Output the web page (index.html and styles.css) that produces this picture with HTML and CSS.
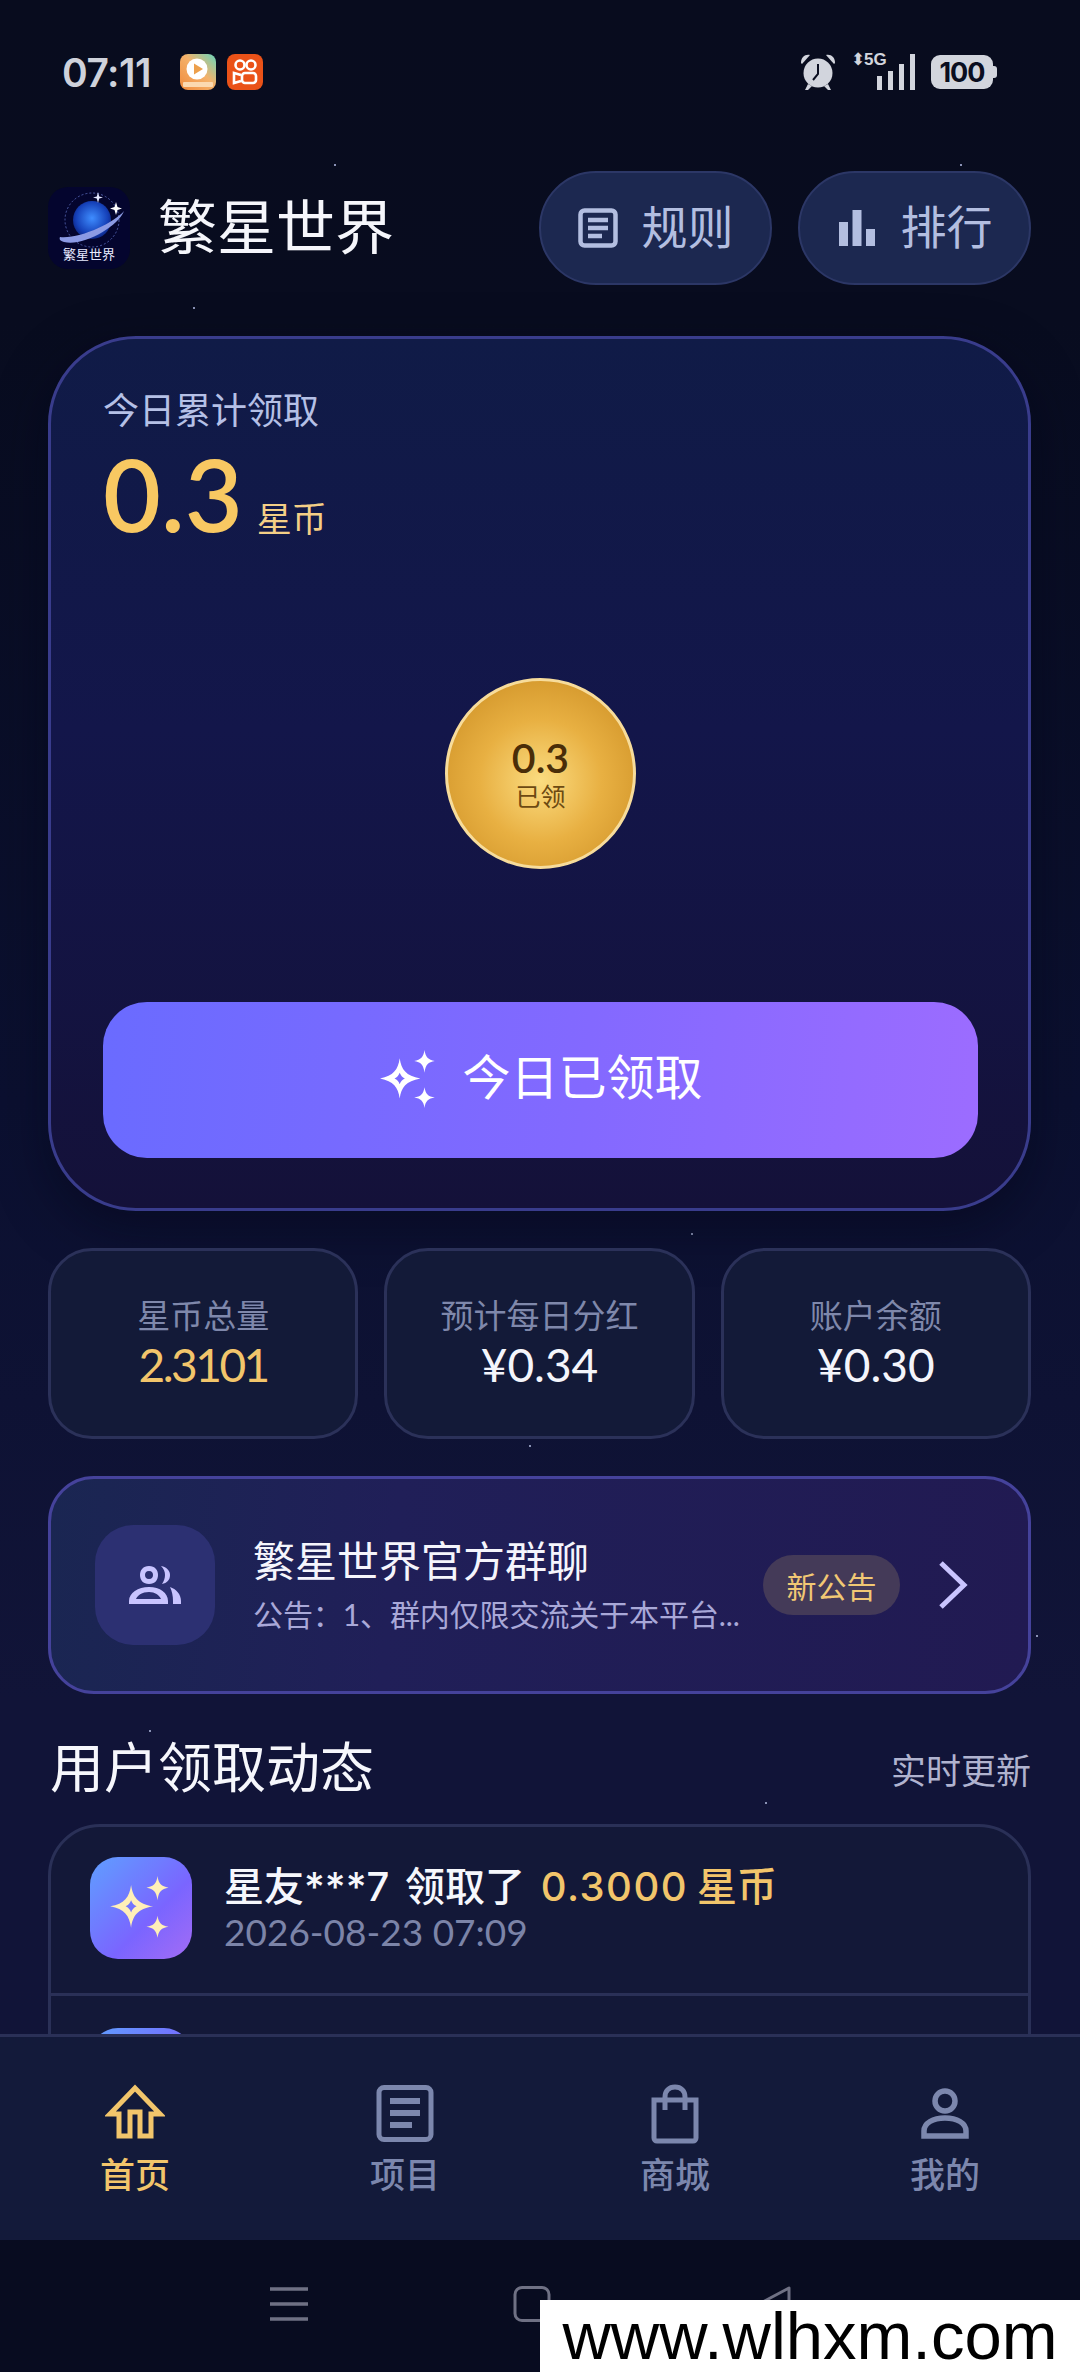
FILE: index.html
```html
<!DOCTYPE html>
<html lang="zh-CN">
<head>
<meta charset="utf-8">
<title>繁星世界</title>
<link rel="stylesheet" href="styles.css">
</head>
<body>
<svg width="0" height="0" class="defs">
  <defs>
    <symbol id="sparkle" viewBox="0 0 60 60">
      <path fill-rule="evenodd" d="M21 9C22.500 20 27 26 41 28.500C27 31 22.500 37 21 48C19.500 37 15 31 2 28.500C15 26 19.500 20 21 9ZM21 23C20 25.500 18.500 27.500 16 28.500C18.500 29.500 20 31.500 21 34C22 31.500 23.500 29.500 26 28.500C23.500 27.500 22 25.500 21 23Z"/>
      <path d="M45 1C46 8 48.500 10.500 55 11.500C48.500 12.500 46 15 45 23C44 15 41.500 12.500 35 11.500C41.500 10.500 44 8 45 1Z"/>
      <path d="M45 37C46 43.500 48.500 46 55 47C48.500 48 46 50.500 45 57C44 50.500 41.500 48 35 47C41.500 46 44 43.500 45 37Z"/>
    </symbol>
  </defs>
</svg>
<div class="page">
  <div class="status">
    <div class="status-left">
      <span class="time">07:11</span>
      <svg class="app-icon" viewBox="0 0 36 36">
        <defs><linearGradient id="appA" x1="0" y1="1" x2="1" y2="0"><stop offset="0" stop-color="#f08a3c"/><stop offset=".55" stop-color="#f4b26b"/><stop offset="1" stop-color="#66d6bd"/></linearGradient></defs>
        <rect width="36" height="36" rx="8" fill="url(#appA)"/>
        <circle cx="17" cy="15" r="10.500" fill="#fff"/>
        <path d="M14 9.500L23 15L14 20.500Z" fill="#eda04c"/>
        <rect x="3" y="28" width="30" height="5" rx="1" fill="#fbd9b0"/>
      </svg>
      <svg class="app-icon" viewBox="0 0 36 36">
        <rect width="36" height="36" rx="8" fill="#ea5218"/>
        <g fill="none" stroke="#fff" stroke-width="2.600">
          <circle cx="13" cy="11" r="4.500"/>
          <circle cx="24" cy="11" r="4.500"/>
          <rect x="15" y="19" width="14" height="10" rx="3"/>
          <path d="M14 21L7 19V29L14 27"/>
        </g>
      </svg>
    </div>
    <div class="status-right">
      <svg class="alarm" viewBox="0 0 38 38">
        <g fill="#d2d5dd">
          <path d="M2 10C2 4 6 1 11 2L3 11Z"/>
          <path d="M36 10C36 4 32 1 27 2L35 11Z"/>
          <circle cx="19" cy="20" r="14.500"/>
          <path d="M9 31L6 37H9L13 33ZM29 31L32 37H29L25 33Z"/>
        </g>
        <path d="M19 11V21L14 27" fill="none" stroke="#0a0e20" stroke-width="2"/>
      </svg>
      <div class="signal">
        <span class="arrows">⬍</span><span class="five-g">5G</span>
        <svg class="bars" viewBox="0 0 38 36">
          <rect x="0" y="22" width="5" height="14" fill="#d2d5dd"/>
          <rect x="11" y="17" width="5" height="19" fill="#d2d5dd"/>
          <rect x="22" y="10" width="5" height="26" fill="#d2d5dd"/>
          <rect x="33" y="0" width="5" height="36" fill="#d2d5dd"/>
        </svg>
      </div>
      <div class="battery"><span class="battery-num">100</span></div>
    </div>
  </div>

  <header class="top">
    <div class="brand">
      <svg class="logo" viewBox="0 0 82 82">
        <defs><radialGradient id="globe" cx=".5" cy=".45" r=".6"><stop offset="0" stop-color="#3f8dff"/><stop offset=".7" stop-color="#1540b8"/><stop offset="1" stop-color="#0a1c70"/></radialGradient></defs>
        <rect width="82" height="82" rx="20" fill="#04052e"/>
        <circle cx="44" cy="33" r="27" fill="none" stroke="#5d6fc0" stroke-width=".8" stroke-dasharray="2 2"/>
        <circle cx="44" cy="33" r="19" fill="url(#globe)"/>
        <path d="M12 50C32 52 66 36 76 24C70 40 34 60 16 55C12 54 11 52 12 50Z" fill="#8b9ae4"/>
        <path d="M50 5L51.200 9.500L55 10.500L51.200 11.500L50 16L48.800 11.500L45 10.500L48.800 9.500Z" fill="#e4e8ff"/>
        <path d="M68 15L69.500 20L74 21.500L69.500 23L68 28L66.500 23L62 21.500L66.500 20Z" fill="#fff"/>
        <text x="41" y="72" class="logo-text">繁星世界</text>
      </svg>
      <h1 class="brand-name">繁星世界</h1>
    </div>
    <div class="actions">
      <button class="pill">
        <svg class="pill-icon" viewBox="0 0 40 40"><g fill="none" stroke="#b3bee0" stroke-width="4.500"><rect x="2.500" y="2.500" width="35" height="35" rx="4"/><path d="M10 12H30M10 20H30M10 28H24"/></g></svg>
        <span>规则</span>
      </button>
      <button class="pill">
        <svg class="pill-icon" viewBox="0 0 40 40"><g fill="#b3bee0"><rect x="2" y="14" width="9" height="24"/><rect x="15.500" y="2" width="9" height="36"/><rect x="29" y="21" width="9" height="17"/></g></svg>
        <span>排行</span>
      </button>
    </div>
  </header>

  <section class="hero">
    <div class="hero-label">今日累计领取</div>
    <div class="hero-amount"><span class="hero-num">0.3</span><span class="hero-unit">星币</span></div>
    <div class="coin-area">
      <div class="coin">
        <span class="coin-num">0.3</span>
        <span class="coin-label">已领</span>
      </div>
    </div>
    <button class="claim">
      <svg class="claim-icon"><use href="#sparkle"/></svg>
      <span class="claim-text">今日已领取</span>
    </button>
  </section>

  <section class="stats">
    <div class="stat"><span class="stat-label">星币总量</span><span class="stat-value gold tight">2.3101</span></div>
    <div class="stat"><span class="stat-label">预计每日分红</span><span class="stat-value">¥0.34</span></div>
    <div class="stat"><span class="stat-label">账户余额</span><span class="stat-value">¥0.30</span></div>
  </section>

  <section class="notice">
    <div class="notice-icon">
      <svg class="people" viewBox="0 0 52 38">
        <g fill="#c9c4ff">
          <path fill-rule="evenodd" d="M20 0C26 0 29 4 29 9C29 14 26 18 20 18C14 18 11 14 11 9C11 4 14 0 20 0ZM20 5C17 5 16 7 16 9C16 11 17 13 20 13C23 13 24 11 24 9C24 7 23 5 20 5Z"/>
          <path d="M32 0C38 1 41 5 41 9C41 14 38 17 33 18C35 15 36 12 36 9C36 6 35 3 32 0Z"/>
          <path fill-rule="evenodd" d="M0 38V35C0 27 9 21 20 21C31 21 39 27 39 35V38ZM7 33H32C30 29 26 26 20 26C13 26 9 29 7 33Z"/>
          <path d="M41 21C47 23 52 28 52 35V38H44V35C44 30 43 25 41 21Z"/>
        </g>
      </svg>
    </div>
    <div class="notice-body">
      <div class="notice-title">繁星世界官方群聊</div>
      <div class="notice-sub">公告：1、群内仅限交流关于本平台...</div>
    </div>
    <span class="notice-badge">新公告</span>
    <svg class="chev" viewBox="0 0 30 50"><path d="M3 3L26 25L3 47" fill="none" stroke="#c9c4ff" stroke-width="5"/></svg>
  </section>

  <div class="section-head">
    <h2 class="section-title">用户领取动态</h2>
    <span class="section-note">实时更新</span>
  </div>

  <section class="feed">
    <div class="feed-row">
      <div class="avatar"><svg class="avatar-icon"><use href="#sparkle"/></svg></div>
      <div class="feed-text">
        <div class="feed-title">星友***7 领取了 <span class="gold feed-amount">0.3000</span><span class="gold feed-unit">星币</span></div>
        <div class="feed-time">2026-08-23 07:09</div>
      </div>
    </div>
    <div class="feed-row">
      <div class="avatar"><svg class="avatar-icon"><use href="#sparkle"/></svg></div>
    </div>
  </section>
</div>

<div class="dock">
  <nav class="tabs">
    <a class="tab active">
      <svg class="tab-icon" viewBox="0 0 60 60"><path d="M5 30L30 4L55 30H46V52H35V28H25V52H14V30Z" fill="none" stroke="currentColor" stroke-width="5" stroke-linejoin="miter"/></svg>
      <span>首页</span>
    </a>
    <a class="tab">
      <svg class="tab-icon" viewBox="0 0 60 60"><g fill="none" stroke="currentColor" stroke-width="5"><rect x="4" y="3.500" width="52" height="52" rx="5"/></g><g fill="currentColor"><rect x="15" y="14" width="30" height="6"/><rect x="15" y="26" width="30" height="6"/><rect x="15" y="38" width="22" height="6"/></g></svg>
      <span>项目</span>
    </a>
    <a class="tab">
      <svg class="tab-icon" viewBox="0 0 60 60"><g fill="none" stroke="currentColor" stroke-width="5"><path d="M9 16H51V54A3 3 0 0 1 48 57H12A3 3 0 0 1 9 54Z"/><path d="M20 26V13C20 7 24 3 30 3C36 3 40 7 40 13V26"/></g></svg>
      <span>商城</span>
    </a>
    <a class="tab">
      <svg class="tab-icon" viewBox="0 0 60 60"><g fill="none" stroke="currentColor" stroke-width="5.500"><circle cx="30" cy="17" r="10"/><path d="M9 52V47C9 39 18 34 30 34C42 34 51 39 51 47V52Z"/></g></svg>
      <span>我的</span>
    </a>
  </nav>
  <div class="sysbar">
    <svg class="sys-icon" viewBox="0 0 38 36"><path d="M0 3H38M0 18H38M0 33H38" stroke="#6f7184" stroke-width="3.500"/></svg>
    <svg class="sys-icon" viewBox="0 0 38 36"><rect x="2" y="1.500" width="34" height="33" rx="7" fill="none" stroke="#6f7184" stroke-width="3"/></svg>
    <svg class="sys-icon" viewBox="0 0 38 36"><path d="M34 2V34L4 18Z" fill="none" stroke="#6f7184" stroke-width="3" stroke-linejoin="round"/></svg>
  </div>
</div>
<div class="watermark">www.wlhxm.com</div>
</body>
</html>
```
FILE: styles.css
```css
* { box-sizing: border-box; }
html, body { margin: 0; padding: 0; }
body {
  position: relative;
  width: 1080px;
  height: 2372px;
  overflow: hidden;
  color: #fff;
  font-family: "Lato", "Noto Sans CJK SC", sans-serif;
  background:
    radial-gradient(circle 1.500px at 335px 165px, #8a92b5 98%, transparent),
    radial-gradient(circle 1.500px at 961px 165px, #8a92b5 98%, transparent),
    radial-gradient(circle 1.500px at 194px 308px, #8a92b5 98%, transparent),
    radial-gradient(circle 1.500px at 692px 1234px, #8a92b5 98%, transparent),
    radial-gradient(circle 1.500px at 530px 1446px, #8a92b5 98%, transparent),
    radial-gradient(circle 1.500px at 1037px 1636px, #8a92b5 98%, transparent),
    radial-gradient(circle 1.500px at 150px 1731px, #8a92b5 98%, transparent),
    radial-gradient(circle 1.500px at 766px 1803px, #8a92b5 98%, transparent),
    linear-gradient(180deg, #080c1e 0, #080c1f 320px, #0b1030 1100px, #111438 1700px, #111438 100%);
}
.defs { position: absolute; }
.page { padding: 0 49px 0 48px; }

/* status bar */
.status { height: 144px; display: flex; justify-content: space-between; align-items: center; padding: 0 38px 0 14px; }
.status-left { display: flex; align-items: center; gap: 11px; }
.time { font-family: "Inter", "Noto Sans", sans-serif; font-size: 39px; font-weight: 600; color: #cfd2db; letter-spacing: -.500px; margin-right: 18px; }
.app-icon { width: 36px; height: 36px; display: block; }
.status-right { display: flex; align-items: center; }
.alarm { width: 38px; height: 38px; display: block; }
.signal { position: relative; width: 66px; height: 36px; margin-left: 14px; }
.arrows { position: absolute; left: 0; top: -5px; font-size: 17px; color: #d2d5dd; font-family: "DejaVu Sans", sans-serif; line-height: 20px; }
.five-g { position: absolute; left: 13px; top: -4px; font-size: 17px; font-weight: 700; line-height: 20px; color: #d2d5dd; font-family: "Liberation Sans", sans-serif; }
.bars { position: absolute; right: 2px; top: 0; width: 38px; height: 36px; }
.battery { position: relative; width: 62px; height: 34px; margin-left: 14px; background: #d2d5dd; border-radius: 9px; display: flex; align-items: center; justify-content: center; }
.battery::after { content: ""; position: absolute; right: -4px; top: 11px; width: 4px; height: 12px; background: #d2d5dd; border-radius: 0 3px 3px 0; }
.battery-num { font-family: "Inter", sans-serif; font-size: 27px; font-weight: 700; color: #0a0e20; letter-spacing: -1px; }

/* header */
.top { display: flex; justify-content: space-between; align-items: center; height: 114px; margin-top: 27px; }
.brand { display: flex; align-items: center; gap: 28px; }
.logo { width: 82px; height: 82px; display: block; }
.logo-text { font-family: "Noto Sans CJK SC", sans-serif; font-size: 13px; fill: #e8eaff; text-anchor: middle; }
.brand-name { margin: -3px 0 0; font-size: 59px; font-weight: 400; line-height: 1; color: #f5f6fb; }
.actions { display: flex; gap: 26px; }
.pill { width: 233px; height: 114px; display: flex; align-items: center; justify-content: center; gap: 24px; border-radius: 57px; border: 2px solid #2c3766; background: #1c2850; color: #b3bee0; font: inherit; font-size: 46px; line-height: 1; padding: 0; }
.pill span { margin-top: -3px; }
.pill-icon { width: 40px; height: 40px; display: block; }

/* hero */
.hero { height: 875px; margin-top: 51px; padding: 48px 50px 50px 52px; display: flex; flex-direction: column; border: 3px solid #393c8c; border-radius: 88px; background: linear-gradient(180deg, #101b47 0, #13164a 45%, #141139 100%); box-shadow: 0 16px 50px rgba(4, 6, 24, .5); }
.hero-label { font-size: 36px; line-height: 46px; color: #b5c0e6; }
.hero-amount { display: flex; align-items: baseline; margin-top: 8px; height: 104px; }
.hero-num { font-size: 100px; line-height: 104px; color: #f8c862; font-weight: 600; }
.hero-unit { margin-left: 14px; font-size: 35px; line-height: 40px; color: #f4cf86; }
.coin-area { flex: 1; display: flex; align-items: center; justify-content: center; }
.coin { width: 191px; height: 191px; border-radius: 50%; display: flex; flex-direction: column; align-items: center; justify-content: center; border: 3px solid #f7dc9b; background: radial-gradient(circle at 50% 54%, #fbdc80 0, #e8b042 45%, #c88a20 100%); }
.coin-num { font-size: 41px; line-height: 44px; color: #4a2d08; font-weight: 600; }
.coin-label { font-size: 25px; line-height: 32px; color: #6d4a12; }
.claim { height: 156px; display: flex; align-items: center; justify-content: center; gap: 22px; border: 0; border-radius: 44px; background: linear-gradient(95deg, #6a6bff 0, #8369ff 55%, #9c6cff 100%); color: #fff; font: inherit; font-size: 48px; line-height: 1; padding: 0; }
.claim-text { margin-top: -6px; font-weight: 400; }
.claim-icon { width: 62px; height: 62px; display: block; fill: #fff; }

/* stats */
.stats { display: grid; grid-template-columns: repeat(3, 1fr); gap: 26px; margin-top: 37px; }
.stat { height: 191px; padding-top: 42px; display: flex; flex-direction: column; align-items: center; border: 3px solid #2b3159; border-radius: 44px; background: #131a38; }
.stat-label { font-size: 33px; line-height: 44px; color: #7f88ab; }
.stat-value { font-size: 46px; line-height: 55px; color: #f4f5fb; }
.tight { letter-spacing: -2.500px; }
.gold { color: #f2c56b; }

/* notice */
.notice { height: 218px; margin-top: 37px; padding: 0 60px 0 44px; display: flex; align-items: center; border: 3px solid #45429b; border-radius: 46px; background: linear-gradient(95deg, #1a2652 0, #201f58 35%, #211a52 100%); }
.notice-icon { width: 120px; height: 120px; flex: none; display: flex; align-items: center; justify-content: center; border-radius: 38px; background: #2c3072; }
.people { width: 52px; height: 38px; display: block; }
.notice-body { flex: 1; margin-left: 38px; }
.notice-title { font-size: 42px; line-height: 48px; color: #f5f5fc; }
.notice-sub { margin-top: 9px; font-size: 30px; line-height: 40px; color: #a9a8d8; letter-spacing: -.100px; }
.notice-badge { width: 137px; height: 60px; flex: none; display: flex; align-items: center; justify-content: center; border-radius: 30px; background: #443a58; color: #f1c874; font-size: 30px; }
.chev { width: 30px; height: 50px; flex: none; margin-left: 38px; display: block; }

/* section */
.section-head { display: flex; justify-content: space-between; align-items: center; height: 64px; margin-top: 42px; padding: 0 0 0 2px; }
.section-title { margin: 0; font-size: 54px; font-weight: 400; line-height: 64px; color: #f6f7fc; }
.section-note { font-size: 35px; color: #b0b3cf; }

/* feed */
.feed { margin-top: 24px; border: 3px solid #2a3057; border-radius: 52px; background: #131838; }
.feed-row { display: flex; align-items: center; padding: 30px 39px 34px; height: 169px; border-bottom: 3px solid #2a3057; }
.feed-row:last-child { border-bottom: 0; }
.avatar { width: 102px; height: 102px; flex: none; display: flex; align-items: center; justify-content: center; border-radius: 28px; background: linear-gradient(135deg, #5f9fff 0, #7a65ff 60%, #a36cf5 100%); }
.avatar-icon { width: 66px; height: 66px; display: block; fill: #ffefb8; }
.feed-text { margin-left: 32px; }
.feed-title { font-family: "Inter", "Noto Sans CJK SC", sans-serif; font-size: 40px; font-weight: 500; line-height: 48px; color: #f6f7fc; word-spacing: 5px; }
.feed-amount { letter-spacing: 1.500px; }
.feed-unit { margin-left: 9px; }
.feed-time { font-size: 37px; line-height: 42px; color: #7c84a8; }

/* bottom dock */
.dock { position: absolute; left: 0; right: 0; bottom: 0; }
.tabs { height: 206px; display: grid; grid-template-columns: repeat(4, 270px); border-top: 3px solid #2a3057; background: #131a3a; }
.tab { display: flex; flex-direction: column; align-items: center; padding-top: 47px; color: #7c87ad; font-size: 35px; font-weight: 500; line-height: 48px; }
.tab.active { color: #f2c56b; }
.tab-icon { width: 60px; height: 60px; display: block; margin-bottom: 6px; }
.sysbar { height: 132px; padding: 46px 287px 0 270px; display: flex; justify-content: space-between; align-items: flex-start; background: #080c20; }
.sys-icon { width: 38px; height: 36px; display: block; }
.watermark { position: absolute; left: 540px; right: 0; bottom: 0; height: 72px; background: #fff; color: #000; font-family: "Liberation Sans", sans-serif; font-size: 67px; line-height: 72px; text-align: center; }
```
